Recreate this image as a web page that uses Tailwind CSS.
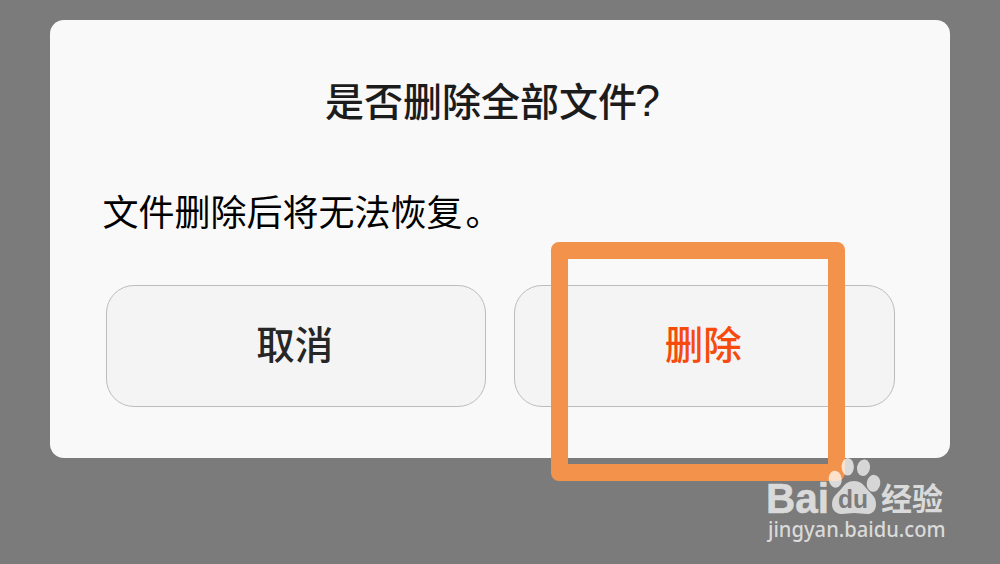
<!DOCTYPE html>
<html lang="zh-CN">
<head>
  <meta charset="UTF-8" />
  <meta name="viewport" content="width=device-width, initial-scale=1.0" />
  <title>删除文件</title>
  <script src="https://cdn.jsdelivr.net/npm/@tailwindcss/browser@4"></script>
</head>
<body class="relative w-[1000px] h-[564px] overflow-hidden bg-[#7b7b7b] pt-[19.5px] font-['Noto_Sans_CJK_SC',sans-serif]">

  <!-- Dialog -->
  <main class="mx-auto flex h-[438px] w-[900px] flex-col rounded-[14px] bg-[#f9f9f9] px-[55.5px] pt-[51px]">
    <h1 class="-ml-[15px] h-[56px] text-center text-[39px] leading-[56px] font-medium whitespace-nowrap text-[#1c1c1c]">是否删除全部文件<span class="-ml-[2px] font-['Liberation_Sans',sans-serif] text-[45px] leading-none font-normal">?</span></h1>
    <p class="mt-[55px] -ml-[3px] h-[56px] text-[36px] leading-[56px] whitespace-nowrap text-black">文件删除后将无法恢复<span class="ml-[3px]">。</span></p>

    <div class="mt-[47.5px] grid h-[122px] grid-cols-2 gap-[28px]">
      <button class="rounded-[28px] border border-[#bcbcbc] bg-[#f4f4f4] pr-[2px] pb-[7px] text-[38.5px] font-medium text-[#262626]">取消</button>
      <button class="rounded-[28px] border border-[#bcbcbc] bg-[#f4f4f4] pr-[2px] pb-[7px] text-[38.5px] font-medium text-[#f74a0d]">删除</button>
    </div>
  </main>

  <!-- Highlight frame -->
  <div class="absolute top-[242px] left-[551px] h-[239px] w-[294px] rounded-[8px] border-[17px] border-[#f3924a]"></div>

  <!-- Watermark -->
  <svg class="absolute top-[450px] left-[760px]" width="200" height="100" viewBox="760 450 200 100">
    <g fill="#e2e2e2" fill-opacity="0.88">
      <ellipse cx="835.2" cy="479.2" rx="6.5" ry="8.5" transform="rotate(-8 835.2 479.2)" fill="#fff" fill-opacity="0.72" />
      <ellipse cx="847.7" cy="466.7" rx="6.2" ry="8.8" fill="#fff" fill-opacity="0.72" />
      <ellipse cx="863.5" cy="467.7" rx="6.5" ry="8.3" transform="rotate(12 863.5 467.7)" />
      <ellipse cx="873.5" cy="483.3" rx="6.8" ry="8.5" transform="rotate(8 873.5 483.3)" />
      <path d="M854 481C848 481 845 484 842 488C838 493 832 496 832 504C832 511 837 514 842 514C847 514 849 513 854 513C859 513 862 514 867 514C872 514 876 511 876 504C876 496 870 493 866 488C863 484 860 481 854 481Z" />
    </g>
    <g fill="#dadada">
      <text x="766" y="513" font-family="Liberation Sans, sans-serif" font-size="42" font-weight="700" stroke="#dadada" stroke-width="0.6" textLength="63" lengthAdjust="spacingAndGlyphs">Bai</text>
      <text x="881" y="510" font-family="Noto Sans CJK SC, sans-serif" font-size="31" font-weight="700" textLength="62" lengthAdjust="spacingAndGlyphs">经验</text>
      <text x="768" y="536.5" font-family="Noto Sans, sans-serif" font-size="21.5" font-weight="500" textLength="177.5" lengthAdjust="spacingAndGlyphs">jingyan.baidu.com</text>
    </g>
    <text x="838" y="508" fill="#7b7b7b" font-family="Liberation Sans, sans-serif" font-size="25" font-weight="700" textLength="30" lengthAdjust="spacingAndGlyphs">du</text>
  </svg>
</body>
</html>
